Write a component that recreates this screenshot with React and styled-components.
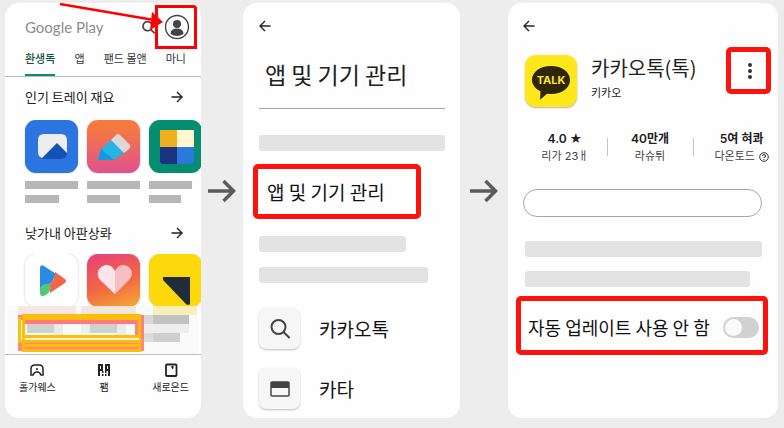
import React, { useState } from "react";
import styled, { createGlobalStyle } from "styled-components";

const GlobalStyle = createGlobalStyle`
  * {
    box-sizing: border-box;
  }
  body {
    margin: 0;
    background: #ededed;
    color: #202020;
    font-family: "Noto Sans CJK KR", sans-serif;
  }
  button {
    display: flex;
    padding: 0;
    border: 0;
    background: none;
    color: inherit;
    font: inherit;
    cursor: pointer;
  }
  h1, h2, p {
    margin: 0;
    font-weight: 400;
  }
  svg {
    display: block;
    flex-shrink: 0;
  }
`;

const Page = styled.main`
  display: grid;
  grid-template-columns: 196fr 42fr 217fr 48fr 270fr;
  padding: 3px 6px 10px 5px;
`;
const Panel = styled.section`
  position: relative;
  display: flex;
  flex-direction: column;
  min-width: 0;
  overflow: hidden;
  border-radius: 14px;
  background: #fefefe;
`;
const Step = styled.div`
  display: flex;
  align-items: center;
  justify-content: center;
  padding-bottom: 40px;
`;

/* store panel */
const StoreHeader = styled.header`
  display: flex;
  align-items: center;
  justify-content: space-between;
  padding: 2px 4px 0 20px;
`;
const Logo = styled.h1`
  color: #8d8d8d;
  font-family: Lato, sans-serif;
  font-size: 15px;
  line-height: 20px;
`;
const HeaderIcons = styled.div`
  display: flex;
  align-items: center;
`;
const Account = styled.button`
  && {
    align-items: center;
    justify-content: center;
    width: 42px;
    height: 44px;
    padding-left: 2px;
    border: 3px solid #fe0000;
  }
`;
const Pointer = styled.svg`
  position: absolute;
  top: 0;
  right: 38px;
`;
const Tabs = styled.nav`
  display: flex;
  justify-content: space-between;
  padding: 0 15px 0 20px;
  border-bottom: 1px solid #bdbdbd;
`;
const Tab = styled.button`
  && {
    height: 27px;
    border-bottom: 2px solid ${(props) => (props.$active ? "#0b8c6c" : "transparent")};
    color: ${(props) => (props.$active ? "#12503f" : "#333")};
    font-size: 11px;
    line-height: 18px;
    font-weight: ${(props) => (props.$active ? 500 : 400)};
    white-space: nowrap;
  }
`;
const SectionHead = styled.div`
  display: flex;
  align-items: center;
  justify-content: space-between;
  padding: ${(props) => (props.$first ? "10px 18px 13px 20px" : "20px 18px 11px 20px")};
`;
const SectionTitle = styled.h2`
  font-size: 13px;
  line-height: 20px;
`;
const Apps = styled.div`
  display: flex;
  gap: 9px;
  padding-left: 20px;
  overflow: hidden;
  height: ${(props) => (props.$cut ? "52px" : "auto")};
`;
const AppItem = styled.div`
  display: flex;
  flex-direction: column;
  flex-shrink: 0;
  gap: 6px;
  width: 53px;
`;
const AppTile = styled.div`
  flex-shrink: 0;
  width: 53px;
  height: 53px;
  margin-bottom: 2px;
  overflow: hidden;
  border-radius: 11px;
  background: ${(props) => props.$bg};
  box-shadow: 0 0 2px rgba(0, 0, 0, 0.25);
`;
const TextBar = styled.div`
  width: ${(props) => props.$w}px;
  height: 8px;
  background: #b7b7b7;
`;
const BottomNav = styled.nav`
  display: flex;
  justify-content: space-between;
  padding: 8px 12px 20px 14px;
  border-top: 1px solid #bdbdbd;
`;
const NavItem = styled.button`
  && {
    flex-direction: column;
    align-items: center;
    gap: 2px;
    font-size: 10px;
    line-height: 16px;
  }
`;

/* shared by the settings and detail panels */
const Body = styled.div`
  display: flex;
  flex-direction: column;
  padding: 17px 15px 9px 16px;
`;
const Skeleton = styled.div`
  width: ${(props) => props.$w};
  height: 16px;
  margin-bottom: ${(props) => props.$gap || 0}px;
  border-radius: 3px;
  background: #e3e3e3;
`;
const PageTitle = styled.h1`
  margin: 26px 0 18px;
  padding-left: 6px;
  font-size: 23px;
  line-height: 32px;
`;
const Rule = styled.hr`
  width: 100%;
  margin: 0 0 26px;
  border: 0;
  border-top: 1px solid #a3a3a3;
`;
const Highlight = styled.button`
  && {
    align-items: center;
    width: 168px;
    height: 55px;
    margin: 13px 0 17px -6px;
    padding-left: 9px;
    border: 5px solid #fe120b;
    border-radius: 5px;
    color: #111;
    font-size: 19px;
    line-height: 28px;
  }
`;
const Entries = styled.div`
  display: flex;
  flex-direction: column;
  gap: 19px;
  padding-top: 25px;
`;
const Entry = styled.button`
  && {
    align-items: center;
    gap: 19px;
    color: #111;
    font-size: 19px;
    line-height: 28px;
  }
`;
const EntryIcon = styled.span`
  display: flex;
  align-items: center;
  justify-content: center;
  width: 41px;
  height: 41px;
  border-radius: 7px;
  background: #f6f6f6;
  box-shadow: 0 1px 2px rgba(0, 0, 0, 0.25);
`;

/* detail panel */
const Detail = styled.div`
  display: flex;
  flex-direction: column;
  padding: 17px 16px 20px 15px;
`;
const AppHead = styled.div`
  display: flex;
  align-items: flex-start;
  margin: 15px -9px 0 0;
  padding-left: 2px;
`;
const TalkTile = styled.div`
  margin-top: 8px;
  border-radius: 11px;
  background: #fee81a;
  box-shadow: 0 1px 2px rgba(0, 0, 0, 0.3);
`;
const AppNames = styled.div`
  flex: 1;
  padding: 7px 0 0 14px;
`;
const AppTitle = styled.h1`
  font-size: 20px;
  line-height: 28px;
  white-space: nowrap;
`;
const Maker = styled.p`
  font-size: 11px;
  line-height: 20px;
`;
const More = styled.button`
  && {
    align-items: center;
    justify-content: center;
    width: 45px;
    height: 47px;
    padding-left: 3px;
    border: 5px solid #fe120b;
    border-radius: 5px;
  }
`;
const Stats = styled.div`
  display: grid;
  grid-template-columns: 84fr 87fr 79fr;
  margin: 22px -10px 0 0;
`;
const Stat = styled.div`
  position: relative;
  display: flex;
  flex-direction: column;
  align-items: center;
  font-family: Inter, "Noto Sans CJK KR", sans-serif;
  white-space: nowrap;

  & + &::before {
    content: "";
    position: absolute;
    top: 9px;
    left: 0;
    height: 18px;
    border-left: 1px solid #c4c4c4;
  }
  &:last-child {
    padding-left: 18px;
  }
`;
const StatValue = styled.strong`
  font-size: 12px;
  line-height: 19px;
  font-weight: 600;
`;
const StatLabel = styled.span`
  display: flex;
  align-items: center;
  gap: 4px;
  font-size: 11px;
  line-height: 17px;
  color: #444;
`;
const Field = styled.input`
  width: 100%;
  height: 28px;
  margin: 24px 0;
  padding: 0 14px;
  border: 1px solid #a6a6a6;
  border-radius: 14px;
  background: transparent;
  font: inherit;
  font-size: 13px;
`;
const Bars = styled.div`
  padding-left: 2px;
`;
const UpdateRow = styled.label`
  display: flex;
  align-items: center;
  justify-content: space-between;
  height: 59px;
  margin: 9px -6px 0 -7px;
  padding: 3px 4px 0 7px;
  border: 5px solid #fe120b;
  border-radius: 5px;
  color: #111;
  font-size: 18px;
  line-height: 28px;
  white-space: nowrap;
`;
const Toggle = styled.input`
  appearance: none;
  flex-shrink: 0;
  width: 36px;
  height: 21px;
  margin: 0;
  padding: 2px;
  border-radius: 11px;
  background: ${(props) => (props.checked ? "#0b8c6c" : "#d1d1d1")};

  &::before {
    content: "";
    display: block;
    width: 17px;
    height: 17px;
    margin-left: ${(props) => (props.checked ? 15 : 0)}px;
    border-radius: 50%;
    background: #fafafa;
  }
`;

const ArrowIcon = ({ size = 12, color = "#222", back, weight = 1.4 }) => (
  <svg width={size} height={size} viewBox="0 0 12 12" fill="none" stroke={color} strokeWidth={weight}>
    <path d={back ? "M11.5 6H1M6 1L1 6l5 5" : "M.5 6H11M6 1l5 5-5 5"} />
  </svg>
);

const StepArrow = () => (
  <svg width="28" height="24" viewBox="0 0 28 24" fill="none" stroke="#5b5b5b" strokeWidth="3.500">
    <path d="M0 12h25M15.500 2l10 10-10 10" />
  </svg>
);

const SearchIcon = ({ size, weight }) => (
  <svg width={size} height={size} viewBox="0 0 20 20" fill="none" stroke="#444" strokeWidth={weight}>
    <circle cx="8.5" cy="8" r="7" />
    <path d="M13.5 13l6 6" />
  </svg>
);

const topApps = [
  {
    bg: "#2a75df",
    bars: [53, 34],
    art: (
      <>
        <rect x="13" y="14" width="29" height="25" rx="6" fill="#1252b8" />
        <path d="M19 14h17q6 0 6 6v13L32 23 17 38q-4-1-4-6V20q0-6 6-6z" fill="#ededf1" />
      </>
    ),
  },
  {
    bg: "linear-gradient(#f77940 15%, #df5190)",
    bars: [53, 33],
    art: (
      <>
        <path d="M11 40l3-11 17-15 12 13-14 12z" fill="#25b4e6" />
        <path d="M11 40l3-11 13 11z" fill="#1399df" />
        <path d="M24 20l5-5q2-2 4 0l10 10q1 2-1 4l-5 4z" fill="#dad8d8" />
      </>
    ),
  },
  {
    bg: "#048d70",
    bars: [43, 32],
    art: (
      <>
        <path d="M11 10h17v18H11z" fill="#edb01f" />
        <path d="M28 10h17v18H28z" fill="#fff7cf" />
        <path d="M11 27h17v17H13l-2-2z" fill="#1a3482" />
        <path d="M28 27h17v15l-2 2H28z" fill="#2b79dd" />
      </>
    ),
  },
];

const moreApps = [
  {
    bg: "#fff",
    art: (
      <>
        <path d="M15 14q0-4 4-2l12 8-4 8-12 9z" fill="#2a8ae4" />
        <path d="M30 18l10 7q2 2 0 4l-15 10V30q5-5 5-12z" fill="#ef6848" />
        <path d="M15 34q3-5 10-4 2 7-4 11-6 3-6-2z" fill="#53c779" />
      </>
    ),
  },
  {
    bg: "linear-gradient(160deg, #e94278 5%, #f16743 55%, #f4ad31)",
    art: (
      <>
        <path d="M28 40L13 26C7 18 14 11 20 11q5 0 8 6z" fill="#fbe4ea" />
        <path d="M28 40l14-14C49 18 42 11 36 11q-5 0-8 6z" fill="#f6bfc1" />
      </>
    ),
  },
  { bg: "#fdd90c", art: <path d="M14 23h27v27q-2 2-4 0L14 26z" fill="#202c37" /> },
];

const AppRow = ({ apps, cut }) => (
  <Apps $cut={cut}>
    {apps.map((app, index) => (
      <AppItem key={index}>
        <AppTile $bg={app.bg}>
          <svg width="53" height="53" viewBox="0 0 53 53">
            {app.art}
          </svg>
        </AppTile>
        {app.bars && app.bars.map((w, i) => <TextBar key={i} $w={w} />)}
      </AppItem>
    ))}
  </Apps>
);

// pixelated strip with the marker frames drawn over it
const mosaic = [
  [13, 0, 58, 9, "#f4e7e5"],
  [76, 0, 55, 9, "#f2e6df"],
  [148, 0, 44, 9, "#f8eebc"],
  [139, 9, 9, 9, "#d7d7d7"],
  [148, 9, 36, 9, "#c2c2c2"],
  [22, 18, 27, 9, "#d0d0d0"],
  [49, 18, 9, 18, "#ececec"],
  [76, 18, 9, 9, "#eee"],
  [85, 18, 27, 9, "#d0d0d0"],
  [112, 18, 9, 18, "#ececec"],
  [139, 18, 45, 9, "#eeeeee"],
  [139, 27, 9, 9, "#dcdcdc"],
  [148, 27, 27, 9, "#cfcfcf"],
  [13, 9, 126, 5, "#ff8080"],
  [20, 14, 114, 4, "#ff7a7a"],
  [13, 37, 126, 8, "#ff8585"],
  [130, 14, 9, 23, "#ff8080"],
  [13, 11, 3, 26, "#fdbd0b"],
  [17, 8, 3, 38, "#fdbd0b"],
  [17, 8, 119, 6, "#fdbd0b"],
  [133, 8, 3, 38, "#fdbd0b"],
  [17, 29, 119, 3, "#fdbd0b"],
  [20, 32, 114, 2, "#fff3df"],
  [13, 34, 124, 3, "#fdbd0b"],
  [17, 38, 119, 3, "#fdbd0b"],
  [17, 43, 119, 3, "#fdbd0b"],
];

const Mosaic = () => (
  <svg width="196" height="48" viewBox="0 0 196 48" shapeRendering="crispEdges">
    <rect x="2" width="191" height="48" fill="#fafafa" />
    {mosaic.map(([x, y, width, height, fill], i) => (
      <rect key={i} x={x} y={y} width={width} height={height} fill={fill} />
    ))}
  </svg>
);

function Store() {
  const [tab, setTab] = useState(0);
  return (
    <Panel>
      <StoreHeader>
        <Logo>Google Play</Logo>
        <HeaderIcons>
          <button aria-label="검색">
            <SearchIcon size={13} weight={2.6} />
          </button>
          <Account aria-label="계정">
            <svg width="26" height="26" viewBox="0 0 26 26">
              <circle cx="13" cy="13" r="11.5" fill="#fff" stroke="#444" strokeWidth="1.4" />
              <circle cx="13" cy="10" r="4" fill="#444" />
              <path d="M6.5 20q0-5.500 6.500-5.500t6.500 5.500q-6.500 4-13 0z" fill="#444" />
            </svg>
          </Account>
        </HeaderIcons>
      </StoreHeader>
      <Pointer width="106" height="30" viewBox="0 0 106 30">
        <path d="M3 1l94 16" stroke="#fe0000" strokeWidth="2.500" />
        <path d="M95 9l11 10-13 8z" fill="#fe0000" />
      </Pointer>
      <Tabs>
        {["환생독", "앱", "팬드 몰앤", "마니"].map((name, index) => (
          <Tab key={name} $active={tab === index} onClick={() => setTab(index)}>
            {name}
          </Tab>
        ))}
      </Tabs>
      <SectionHead $first>
        <SectionTitle>인기 트레이 재요</SectionTitle>
        <button aria-label="더보기">
          <ArrowIcon />
        </button>
      </SectionHead>
      <AppRow apps={topApps} />
      <SectionHead>
        <SectionTitle>낮가내 아판상롸</SectionTitle>
        <button aria-label="더보기">
          <ArrowIcon />
        </button>
      </SectionHead>
      <AppRow apps={moreApps} cut />
      <Mosaic />
      <BottomNav>
        <NavItem>
          <svg width="14" height="14" viewBox="0 0 14 14" fill="none" stroke="#222" strokeWidth="1.500">
            <path d="M1 12V6q0-4 4-4h4q4 0 4 4v6h-2q-1-3-4-3t-4 3z" />
            <path d="M6 6h2" />
          </svg>
          홀가웨스
        </NavItem>
        <NavItem>
          <svg width="14" height="14" viewBox="0 0 14 14" fill="none" stroke="#222" strokeWidth="2">
            <path d="M2 13V2h3v5H2M12 13V2H9v5h3" />
            <path d="M5 9h1.500M8 9h1.500M5 12h1.500M8 12h1.500" />
          </svg>
          팸
        </NavItem>
        <NavItem>
          <svg width="14" height="14" viewBox="0 0 14 14" fill="none" stroke="#222" strokeWidth="1.800">
            <rect x="2" y="1.500" width="10.500" height="11.500" rx="1" />
            <path d="M7 4h3M8.500 3v3" strokeWidth="1.200" />
          </svg>
          새로은드
        </NavItem>
      </BottomNav>
    </Panel>
  );
}

function Settings() {
  return (
    <Panel>
      <Body>
        <button aria-label="뒤로">
          <ArrowIcon back />
        </button>
        <PageTitle>앱 및 기기 관리</PageTitle>
        <Rule />
        <Skeleton $w="100%" />
        <Highlight>앱 및 기기 관리</Highlight>
        <Skeleton $w="79%" $gap={15} />
        <Skeleton $w="91%" />
        <Entries>
          <Entry>
            <EntryIcon>
              <SearchIcon size={20} weight={2} />
            </EntryIcon>
            카카오톡
          </Entry>
          <Entry>
            <EntryIcon>
              <svg width="20" height="16" viewBox="0 0 20 16">
                <rect x="1" y="1" width="18" height="14" rx="1" fill="#f6f6f6" stroke="#444" strokeWidth="1.500" />
                <path d="M1 1h18v6H1z" fill="#444" />
              </svg>
            </EntryIcon>
            카타
          </Entry>
        </Entries>
      </Body>
    </Panel>
  );
}

function AppDetail() {
  const [off, setOff] = useState(false);
  return (
    <Panel>
      <Detail>
        <button aria-label="뒤로">
          <ArrowIcon back />
        </button>
        <AppHead>
          <TalkTile>
            <svg width="52" height="52" viewBox="0 0 52 52">
              <path
                d="M26 11c11 0 19 6 19 14s-8 14-19 14l-4-.3-7 6 .5-8.500C10 33.500 7 29.500 7 25c0-8 8-14 19-14z"
                fill="#30240a"
              />
              <text
                x="26"
                y="29"
                textAnchor="middle"
                fill="#fee81a"
                fontFamily="Inter, sans-serif"
                fontSize="11"
                fontWeight="700"
              >
                TALK
              </text>
            </svg>
          </TalkTile>
          <AppNames>
            <AppTitle>카카오톡(톡)</AppTitle>
            <Maker>키카오</Maker>
          </AppNames>
          <More aria-label="메뉴">
            <svg width="4" height="16" viewBox="0 0 4 16" fill="#333">
              <circle cx="2" cy="2" r="2" />
              <circle cx="2" cy="8" r="2" />
              <circle cx="2" cy="14" r="2" />
            </svg>
          </More>
        </AppHead>
        <Stats>
          <Stat>
            <StatValue>4.0 ★</StatValue>
            <StatLabel>리가 23ㅐ</StatLabel>
          </Stat>
          <Stat>
            <StatValue>40만개</StatValue>
            <StatLabel>라슈튀</StatLabel>
          </Stat>
          <Stat>
            <StatValue>5여 혀콰</StatValue>
            <StatLabel>
              다온토드
              <svg width="10" height="10" viewBox="0 0 10 10" fill="none" stroke="#333">
                <circle cx="5" cy="5" r="4.300" />
                <path d="M3.500 4q0-1.500 1.500-1.500T6.500 4 5 5.500V6M5 7v1" />
              </svg>
            </StatLabel>
          </Stat>
        </Stats>
        <Field type="text" aria-label="검색어" />
        <Bars>
          <Skeleton $w="100%" $gap={14} />
          <Skeleton $w="95%" />
        </Bars>
        <UpdateRow>
          자동 업레이트 사용 안 함
          <Toggle type="checkbox" checked={off} onChange={() => setOff(!off)} />
        </UpdateRow>
      </Detail>
    </Panel>
  );
}

function App() {
  return (
    <>
      <GlobalStyle />
      <Page>
        <Store />
        <Step>
          <StepArrow />
        </Step>
        <Settings />
        <Step>
          <StepArrow />
        </Step>
        <AppDetail />
      </Page>
    </>
  );
}

export default App;
